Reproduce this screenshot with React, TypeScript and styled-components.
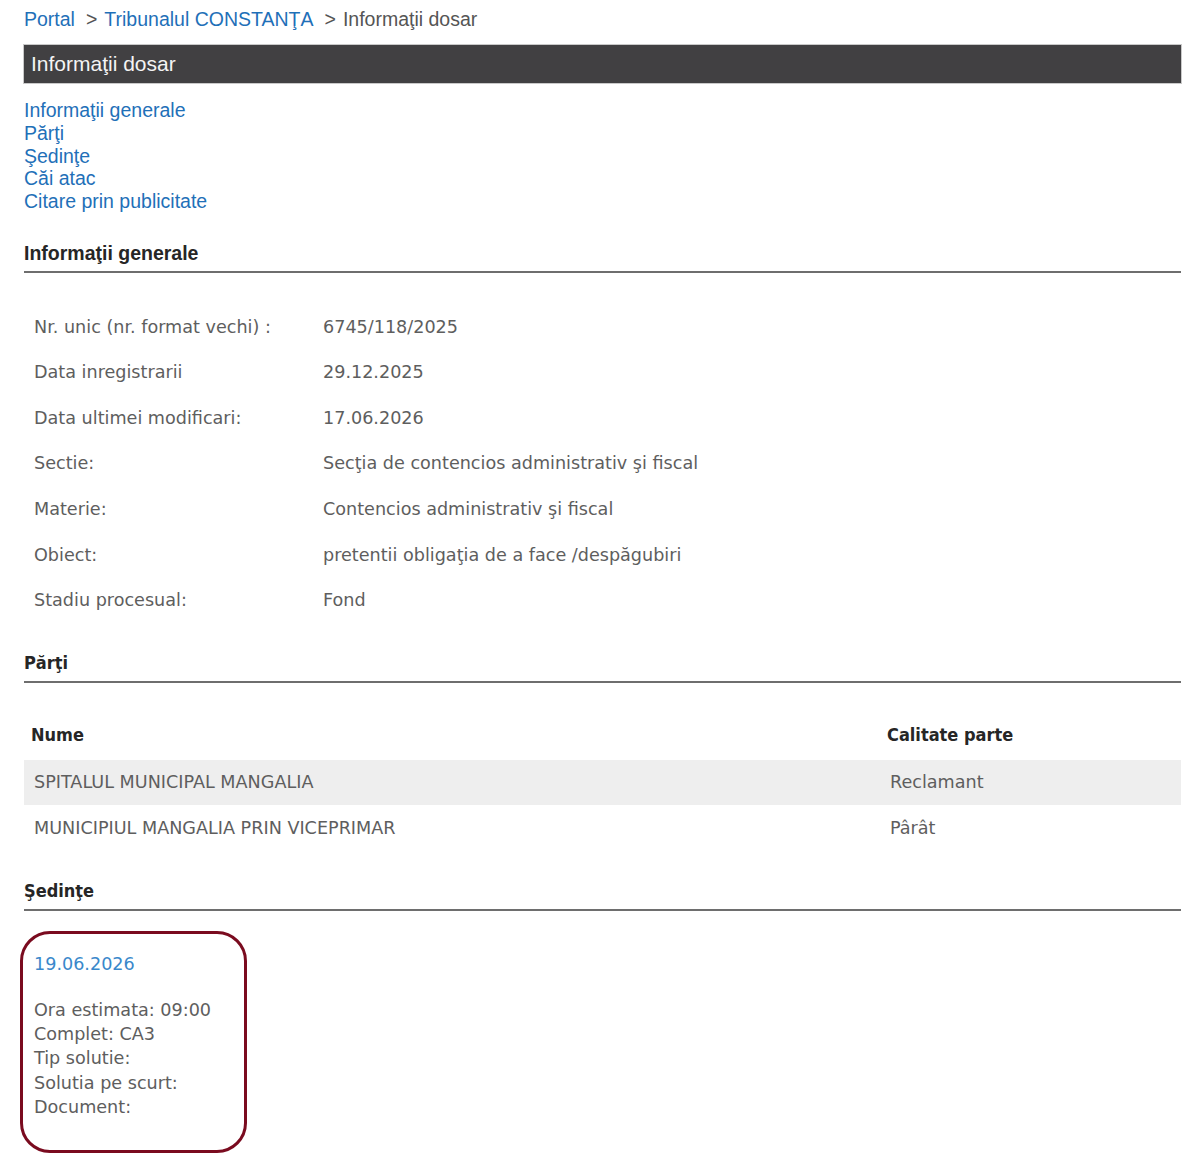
import React from 'react';
import styled, { createGlobalStyle } from 'styled-components';

const GlobalStyle = createGlobalStyle`
  html, body { margin: 0; padding: 0; background: #fff; }
  body { font-family: "Liberation Sans", Arial, sans-serif; }
`;

const Page = styled.div`
  width: 1157px;
  padding: 8px 19px 20px 24px;
`;

/* breadcrumb */
const Crumbs = styled.div`
  display: flex;
  align-items: baseline;
  font-size: 19.5px;
  line-height: 22px;
  color: #555;
`;

const CrumbLink = styled.a`
  color: #1f70b8;
  text-decoration: none;
`;

const Sep = styled.span`
  margin: 0 7px 0 11px;
  color: #555;
`;

const TitleBar = styled.div`
  margin-top: 15px;
  height: 38px;
  display: flex;
  align-items: center;
  padding-left: 7px;
  background: #414042;
  box-shadow: 0 0 0 1px #c9c9c9;
  color: #f4f4f4;
  font-size: 21px;
`;

const Nav = styled.nav`
  margin-top: 16px;
  display: flex;
  flex-direction: column;
  font-size: 19.5px;
  line-height: 22.75px;
`;

const NavLink = styled.a`
  color: #1f70b8;
  text-decoration: none;
  width: fit-content;
`;

const SectionTitle = styled.h2<{ $arial?: boolean }>`
  margin: 28px 0 0;
  padding-bottom: 6px;
  border-bottom: 2px solid #6e6e6e;
  line-height: 24px;
  color: #262626;
  font-weight: bold;
  font-family: ${({ $arial }) =>
    $arial ? '"Liberation Sans", Arial, sans-serif' : '"DejaVu Sans Condensed", "DejaVu Sans", Tahoma, sans-serif'};
  font-size: ${({ $arial }) => ($arial ? '19.5px' : '18px')};
`;

const Table = styled.table`
  margin-top: 31px;
  width: 100%;
  border-collapse: collapse;
  font-family: "DejaVu Sans", Tahoma, sans-serif;
  font-size: 17.6px;
  color: #5e5e5e;
`;

const Row = styled.tr<{ $shade?: boolean }>`
  height: 45.6px;
  background: ${({ $shade }) => ($shade ? '#eeeeee' : 'transparent')};
`;

const Cell = styled.td<{ $w?: number }>`
  padding: 0 0 0 10px;
  width: ${({ $w }) => ($w ? `${$w}px` : 'auto')};
  vertical-align: middle;
  white-space: nowrap;
`;

const HeadCell = styled.th<{ $w?: number }>`
  padding: 0 0 5px 7px;
  width: ${({ $w }) => ($w ? `${$w}px` : 'auto')};
  text-align: left;
  vertical-align: middle;
  font-family: "DejaVu Sans Condensed", "DejaVu Sans", Tahoma, sans-serif;
  font-weight: bold;
  font-size: 18px;
  color: #262626;
`;

/* sedinta */
const SessionCard = styled.div`
  margin: 20px 0 0 -4px;
  width: 227px;
  height: 222px;
  box-sizing: border-box;
  padding: 18px 0 0 11px;
  border: 3.5px solid #7a0b1f;
  border-radius: 30px;
  font-family: "DejaVu Sans", Verdana, sans-serif;
  font-size: 17.6px;
  color: #5e5e5e;
`;

const SessionDate = styled.a`
  display: block;
  color: #3a88cb;
  text-decoration: none;
  line-height: 24px;
  margin-bottom: 22px;
`;

const SessionLine = styled.div`
  line-height: 24.3px;
`;

const info: [string, string][] = [
  ['Nr. unic (nr. format vechi) :', '6745/118/2025'],
  ['Data inregistrarii', '29.12.2025'],
  ['Data ultimei modificari:', '17.06.2026'],
  ['Sectie:', 'Secţia de contencios administrativ şi fiscal'],
  ['Materie:', 'Contencios administrativ şi fiscal'],
  ['Obiect:', 'pretentii obligaţia de a face /despăgubiri'],
  ['Stadiu procesual:', 'Fond'],
];

const parti: [string, string][] = [
  ['SPITALUL MUNICIPAL MANGALIA', 'Reclamant'],
  ['MUNICIPIUL MANGALIA PRIN VICEPRIMAR', 'Pârât'],
];

export default function App() {
  return (
    <Page>
      <GlobalStyle />
      <Crumbs>
        <CrumbLink href="#">Portal</CrumbLink>
        <Sep>&gt;</Sep>
        <CrumbLink href="#">Tribunalul CONSTANŢA</CrumbLink>
        <Sep>&gt;</Sep>
        <span>Informaţii dosar</span>
      </Crumbs>

      <TitleBar>Informaţii dosar</TitleBar>

      <Nav>
        <NavLink href="#">Informaţii generale</NavLink>
        <NavLink href="#">Părţi</NavLink>
        <NavLink href="#">Şedinţe</NavLink>
        <NavLink href="#">Căi atac</NavLink>
        <NavLink href="#">Citare prin publicitate</NavLink>
      </Nav>

      <SectionTitle $arial>Informaţii generale</SectionTitle>
      <Table>
        <tbody>
          {info.map(([k, v]) => (
            <Row key={k}>
              <Cell $w={279}>{k}</Cell>
              <Cell>{v}</Cell>
            </Row>
          ))}
        </tbody>
      </Table>

      <SectionTitle>Părţi</SectionTitle>
      <Table>
        <thead>
          <Row>
            <HeadCell $w={849}>Nume</HeadCell>
            <HeadCell>Calitate parte</HeadCell>
          </Row>
        </thead>
        <tbody>
          {parti.map(([n, c], i) => (
            <Row key={n} $shade={i === 0}>
              <Cell>{n}</Cell>
              <Cell>{c}</Cell>
            </Row>
          ))}
        </tbody>
      </Table>

      <SectionTitle>Şedinţe</SectionTitle>
      <SessionCard>
        <SessionDate href="#">19.06.2026</SessionDate>
        <SessionLine>Ora estimata: 09:00</SessionLine>
        <SessionLine>Complet: CA3</SessionLine>
        <SessionLine>Tip solutie:</SessionLine>
        <SessionLine>Solutia pe scurt:</SessionLine>
        <SessionLine>Document:</SessionLine>
      </SessionCard>
    </Page>
  );
}
